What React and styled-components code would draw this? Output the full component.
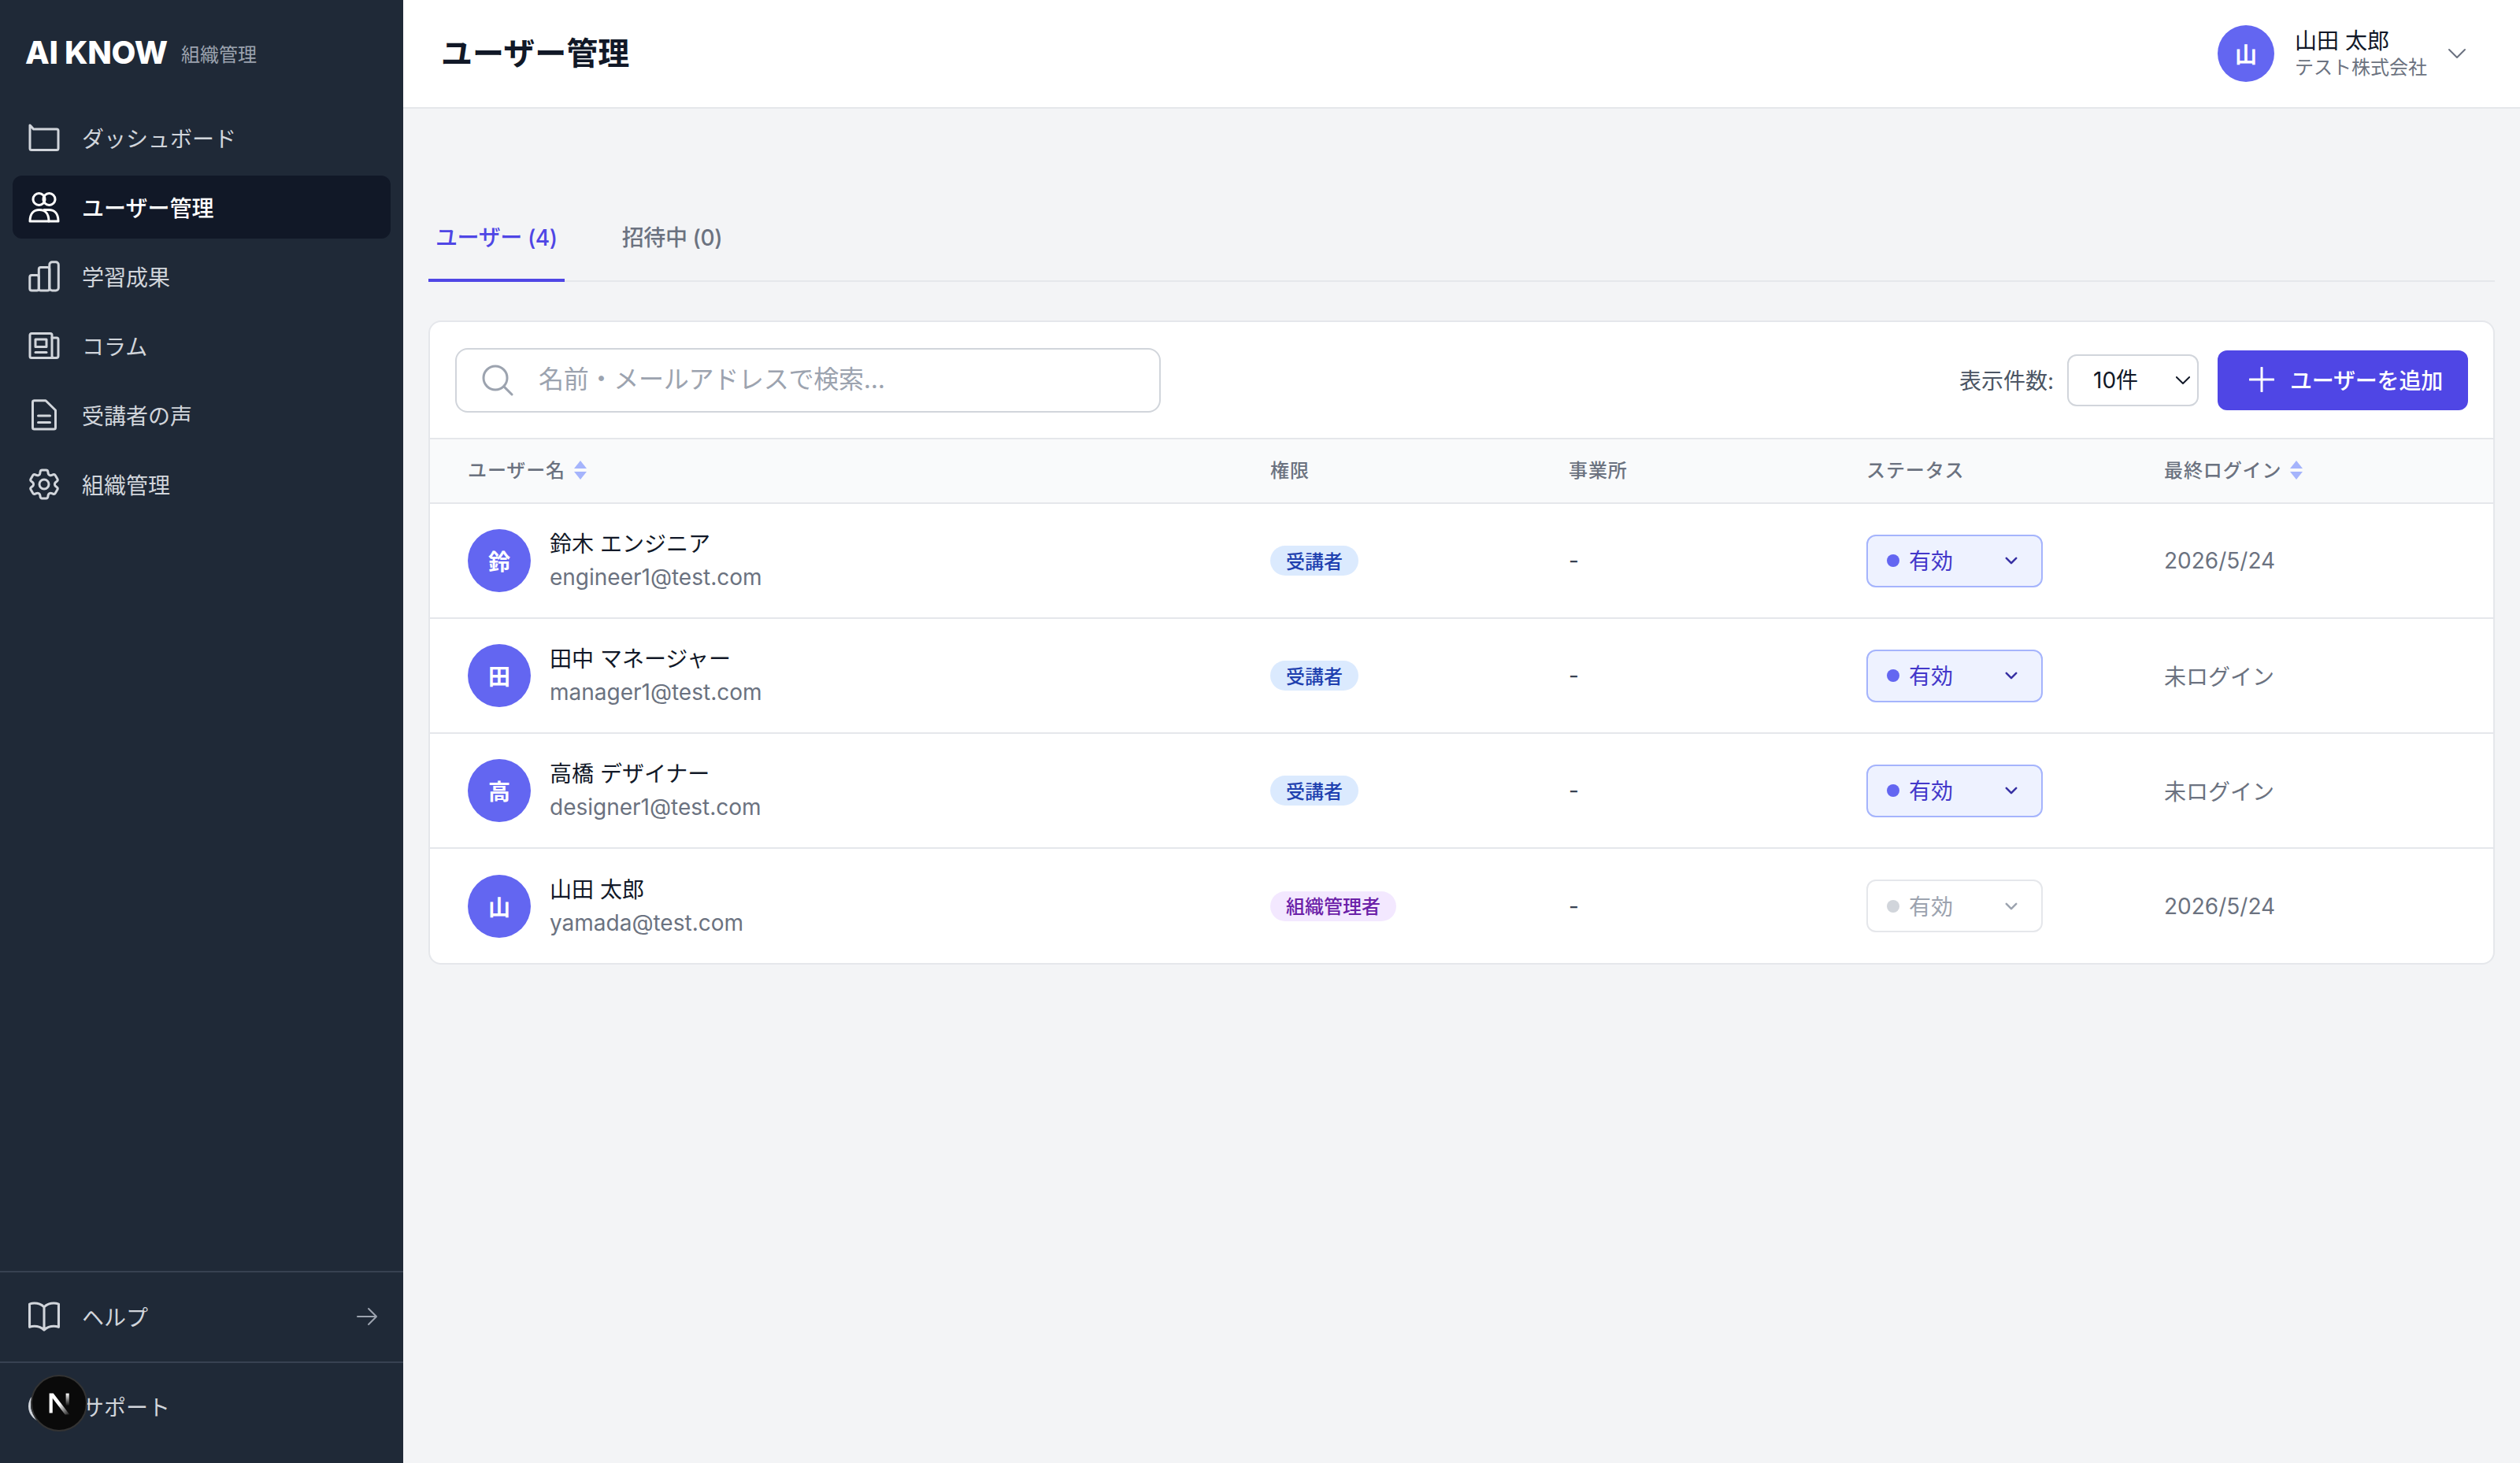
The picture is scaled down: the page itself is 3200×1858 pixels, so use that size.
import React from 'react';
import styled, { createGlobalStyle } from 'styled-components';
import { HiOutlineCog6Tooth, HiOutlineBookOpen, HiOutlineQuestionMarkCircle, HiOutlineArrowRight, HiOutlineChevronDown, HiOutlineMagnifyingGlass, HiOutlinePlus } from 'react-icons/hi2';

const Global = createGlobalStyle`
  html, body { margin: 0; padding: 0; height: 100%; }
  body { font-family: Inter, "Noto Sans CJK JP", sans-serif; background: #f3f4f6; color: #111827; overflow: hidden; }
  #root { height: 100%; }
  * { box-sizing: border-box; }
`;

const Shell = styled.div`display: flex; width: 3200px; height: 1858px;`;
const Sidebar = styled.aside`position: relative; width: 512px; flex: none; background: #1f2937; display: flex; flex-direction: column;`;
const Brand = styled.div`height: 135px; padding: 0 32px 1px; display: flex; align-items: center; gap: 17px;`;
const Logo = styled.div`font-size: 40px; font-weight: 800; color: #fff; letter-spacing: -0.3px; line-height: 1;`;
const BrandSub = styled.span`font-size: 24px; color: #9ca3af;`;
const Nav = styled.nav`flex: 1; padding: 0 16px; display: flex; flex-direction: column; gap: 8px;`;
const NavItem = styled.div`
  height: 80px; padding: 0 20px; border-radius: 12px; display: flex; align-items: center; gap: 28px;
  font-size: 28px; color: ${p => (p.$active ? '#fff' : '#d1d5db')}; background: ${p => (p.$active ? '#111827' : 'transparent')};
  font-weight: ${p => (p.$active ? 500 : 400)};
  svg { width: 40px; height: 40px; flex: none; }
`;
const FooterBlock = styled.div`border-top: 2px solid #374151; height: ${p => p.$h}px; padding: 0 16px ${p => p.$pb}px; display: flex; align-items: center;`;
const FooterItem = styled(NavItem)`flex: 1; justify-content: flex-start;`;
const ArrowWrap = styled.span`margin-left: auto; margin-right: -6px; display: flex; color: #9ca3af; svg { width: 32px; height: 32px; }`;
const DevBadge = styled.div`
  position: absolute; left: 39px; top: 1746px; width: 72px; height: 72px; border-radius: 50%;
  background: #0a0a0a; border: 2px solid #333; display: flex; align-items: center; justify-content: center;
`;

const Main = styled.main`flex: 1; min-width: 0; display: flex; flex-direction: column;`;
const Header = styled.header`height: 138px; background: #fff; border-bottom: 2px solid #e5e7eb; padding: 0 64px 0 48px; display: flex; align-items: center; justify-content: space-between;`;
const Title = styled.h1`margin: 0 0 6px; font-size: 40px; font-weight: 700; color: #111827;`;
const Account = styled.div`display: flex; align-items: center; gap: 24px;`;
const Avatar = styled.div`
  width: ${p => p.$size}px; height: ${p => p.$size}px; flex: none; border-radius: 50%; background: #6366f1; color: #fff;
  font-size: 28px; font-weight: 700; display: flex; align-items: center; justify-content: center;
`;
const AccountText = styled.div`display: flex; flex-direction: column; margin: 0 -2px 0 2px;`;
const AccountName = styled.div`font-size: 28px; line-height: 36px; color: #111827;`;
const AccountOrg = styled.div`font-size: 24px; line-height: 32px; color: #6b7280;`;
const ChevronBtn = styled.span`display: flex; color: #6b7280; svg { width: 32px; height: 32px; }`;

const Content = styled.div`padding: 0 32px; flex: 1;`;
const Tabs = styled.div`margin-top: 106px; display: flex; gap: 64px; border-bottom: 2px solid #e5e7eb; height: 114px;`;
const Tab = styled.div`
  height: 114px; padding: 2px 9px 0; margin-bottom: -2px; display: flex; align-items: center; font-size: 28px; font-weight: 500;
  color: ${p => (p.$active ? '#4f46e5' : '#6b7280')}; border-bottom: 4px solid ${p => (p.$active ? '#4f46e5' : 'transparent')};
  letter-spacing: -0.4px;
`;
const Card = styled.section`margin-top: 49px; background: #fff; border: 2px solid #e5e7eb; border-radius: 16px; overflow: hidden;`;
const Toolbar = styled.div`height: 147px; padding: 0 32px; display: flex; align-items: center; justify-content: space-between;`;
const Search = styled.div`
  width: 896px; height: 82px; border: 2px solid #d1d5db; border-radius: 16px; padding: 0 32px; display: flex; align-items: center; gap: 32px;
  color: #9ca3af; svg { width: 40px; height: 40px; flex: none; }
`;
const SearchInput = styled.input`
  flex: 1; min-width: 0; border: 0; outline: 0; background: none; padding: 0 0 2px; font: 400 32px Inter, "Noto Sans CJK JP", sans-serif; color: #111827;
  &::placeholder { color: #9ca3af; opacity: 1; letter-spacing: -0.25px; }
`;
const Controls = styled.div`display: flex; align-items: center;`;
const PerPageLabel = styled.label`font-size: 28px; color: #4b5563; margin: 0 17px 2px 0;`;
const PerPageWrap = styled.div`position: relative; margin-right: 24px; display: flex;`;
const PerPage = styled.select`
  appearance: none; width: 167px; height: 66px; border: 2px solid #d1d5db; border-radius: 12px; background: #fff; padding-left: 31px;
  font: 400 28px Inter, "Noto Sans CJK JP", sans-serif; color: #111827;
`;
const SelectChevron = styled.span`position: absolute; right: 7px; top: 20px; display: flex; color: #111827; pointer-events: none; svg { width: 26px; height: 26px; stroke-width: 1.8; }`;
const AddButton = styled.button`
  width: 318px; height: 76px; border: 0; border-radius: 12px; background: #4f46e5; color: #fff; display: flex; align-items: center; justify-content: center; gap: 20px; padding: 0 0 2px 8px;
  font: 500 28px Inter, "Noto Sans CJK JP", sans-serif; letter-spacing: -0.2px; svg { width: 32px; height: 32px; flex: none; }
`;

const Table = styled.table`width: 100%; border-collapse: collapse; table-layout: fixed;`;
const HeadRow = styled.tr`background: #f9fafb; border-top: 2px solid #e5e7eb; border-bottom: 2px solid #e5e7eb; height: 82px;`;
const Th = styled.th`padding: 0 0 6px 48px; text-align: left; font-size: 24px; font-weight: 500; color: #6b7280; letter-spacing: 0.9px;`;
const ThInner = styled.span`display: inline-flex; align-items: center; gap: 10px; svg { margin-top: 4px; }`;
const Row = styled.tr`height: 146px; border-bottom: 2px solid #e5e7eb; &:last-child { border-bottom: 0; }`;
const Td = styled.td`padding: 0 0 0 48px; font-size: 28px; color: ${p => p.$color || '#6b7280'};`;
const UserCell = styled.div`display: flex; align-items: center; gap: 24px;`;
const UserName = styled.div`font-size: 28px; line-height: 42px; color: #111827;`;
const UserMail = styled.div`font-size: 28px; line-height: 42px; color: #6b7280;`;
const Badge = styled.span`
  display: inline-flex; align-items: center; height: 38px; padding: 0 20px 2px; border-radius: 999px; font-size: 24px; font-weight: 500;
  background: ${p => p.$bg}; color: ${p => p.$fg};
`;
const Status = styled.div`
  width: 224px; height: 67px; border-radius: 12px; padding: 0 28px 2px 24px; display: flex; align-items: center; gap: 12px; font-size: 28px;
  border: 2px solid ${p => (p.$off ? '#e5e7eb' : '#a5b4fc')}; background: ${p => (p.$off ? '#fff' : '#eef2ff')}; color: ${p => (p.$off ? '#9ca3af' : '#4338ca')};
`;
const Dot = styled.span`width: 16px; height: 16px; margin-top: 2px; border-radius: 50%; background: ${p => (p.$off ? '#d1d5db' : '#6366f1')};`;
const StatusArrow = styled.span`margin: 2px 0 0 auto; display: flex; color: ${p => (p.$off ? '#9ca3af' : '#3730a3')}; svg { width: 20px; height: 20px; stroke-width: 3; }`;
const Glyph = styled.svg.attrs({ viewBox: '0 0 40 40', fill: 'none', stroke: 'currentColor', strokeWidth: 3, strokeLinejoin: 'round', strokeLinecap: 'round' })``;

const Sort = () => (
  <svg width="18" height="24" viewBox="0 0 18 24" aria-hidden="true">
    <path d="M9 0l8 10H1z" fill="#a5b4fc" />
    <path d="M9 24L1 14h16z" fill="#a5b4fc" />
  </svg>
);
const NextMark = () => (
  <svg width="62" height="62" viewBox="0 0 180 180" aria-hidden="true">
    <defs>
      <linearGradient id="nx1" x1="95" y1="90" x2="135" y2="130" gradientUnits="userSpaceOnUse"><stop stopColor="#fff" /><stop offset="1" stopColor="#fff" stopOpacity="0" /></linearGradient>
      <linearGradient id="nx2" x1="121" y1="54" x2="120" y2="100" gradientUnits="userSpaceOnUse"><stop stopColor="#fff" /><stop offset="1" stopColor="#fff" stopOpacity="0" /></linearGradient>
    </defs>
    <path d="M54 54h15l60 78h-17L66.1 72v54H54z" fill="url(#nx1)" />
    <rect x="115" y="54" width="12" height="72" fill="url(#nx2)" />
  </svg>
);

const FolderIcon = () => <Glyph><path d="M2 4v29.5a2 2 0 0 0 2 2h32a2 2 0 0 0 2-2V11a2 2 0 0 0-2-2H6.500L3.500 5.500z" /></Glyph>;
const UsersIcon = () => (
  <Glyph>
    <circle cx="13.500" cy="10" r="7.500" /><circle cx="26.500" cy="10" r="7.500" />
    <path d="M2 38c0-10 5-14.500 12-14.500S26 28 26 38z" />
    <path d="M20 23.600c1-.1 4-.1 6-.1 7 0 12 4.500 12 14.500H26" />
  </Glyph>
);
const ChartIcon = () => (
  <Glyph>
    <rect x="1.800" y="18.500" width="11.500" height="19.500" rx="2.500" />
    <rect x="13.300" y="8.500" width="13.500" height="29.500" rx="2.500" />
    <rect x="26.800" y="1.800" width="11.500" height="36.200" rx="3.500" />
  </Glyph>
);
const NewsIcon = () => (
  <Glyph>
    <path d="M4 4.500h24a2 2 0 0 1 2 2V33a2.500 2.500 0 0 0 2.500 2.500H4a2 2 0 0 1-2-2V6.500a2 2 0 0 1 2-2z" />
    <path d="M30 10h6a2 2 0 0 1 2 2v21a2.500 2.500 0 0 1-2.500 2.500h-3" />
    <rect x="9" y="12" width="14" height="9.500" />
    <path d="M9 28.500h14" />
  </Glyph>
);
const DocIcon = () => (
  <Glyph>
    <path d="M7.500 1.800H22L34.500 14v22a2 2 0 0 1-2 2h-25a2 2 0 0 1-2-2V3.800a2 2 0 0 1 2-2z" />
    <path d="M12.500 21h15M12.500 29.500h15" />
  </Glyph>
);
const GearIcon = () => <HiOutlineCog6Tooth viewBox="2 2 20 20" strokeWidth="1.5" />;
const BookIcon = () => <HiOutlineBookOpen viewBox="2.25 2.25 19.5 19.5" strokeWidth="1.5" />;
const SupportIcon = () => <HiOutlineQuestionMarkCircle viewBox="2.25 2.25 19.5 19.5" strokeWidth="1.5" />;

const users = [
  { a: '鈴', n: '鈴木 エンジニア', m: 'engineer1@test.com', r: '受講者', d: '2026/5/24' },
  { a: '田', n: '田中 マネージャー', m: 'manager1@test.com', r: '受講者', d: '未ログイン' },
  { a: '高', n: '高橋 デザイナー', m: 'designer1@test.com', r: '受講者', d: '未ログイン' },
  { a: '山', n: '山田 太郎', m: 'yamada@test.com', r: '組織管理者', d: '2026/5/24', admin: true },
];
const nav = [
  [FolderIcon, 'ダッシュボード'],
  [UsersIcon, 'ユーザー管理', true],
  [ChartIcon, '学習成果'],
  [NewsIcon, 'コラム'],
  [DocIcon, '受講者の声'],
  [GearIcon, '組織管理'],
];

export default function App() {
  return (
    <Shell>
      <Global />
      <Sidebar>
        <Brand><Logo>AI KNOW</Logo><BrandSub>組織管理</BrandSub></Brand>
        <Nav>
          {nav.map(([I, t, a]) => <NavItem key={t} $active={a}><I />{t}</NavItem>)}
        </Nav>
        <FooterBlock $h={115} $pb={2}><FooterItem><BookIcon />ヘルプ<ArrowWrap><HiOutlineArrowRight /></ArrowWrap></FooterItem></FooterBlock>
        <FooterBlock $h={129} $pb={18}><FooterItem><SupportIcon />サポート</FooterItem></FooterBlock>
        <DevBadge><NextMark /></DevBadge>
      </Sidebar>
      <Main>
        <Header>
          <Title>ユーザー管理</Title>
          <Account>
            <Avatar $size={72}>山</Avatar>
            <AccountText><AccountName>山田 太郎</AccountName><AccountOrg>テスト株式会社</AccountOrg></AccountText>
            <ChevronBtn><HiOutlineChevronDown /></ChevronBtn>
          </Account>
        </Header>
        <Content>
          <Tabs><Tab $active>ユーザー (4)</Tab><Tab>招待中 (0)</Tab></Tabs>
          <Card>
            <Toolbar>
              <Search><HiOutlineMagnifyingGlass viewBox="2 2 20 20" strokeWidth="1.5" /><SearchInput placeholder="名前・メールアドレスで検索..." /></Search>
              <Controls>
                <PerPageLabel>表示件数:</PerPageLabel>
                <PerPageWrap>
                  <PerPage defaultValue="10"><option value="10">10件</option><option value="25">25件</option></PerPage>
                  <SelectChevron><HiOutlineChevronDown /></SelectChevron>
                </PerPageWrap>
                <AddButton><HiOutlinePlus viewBox="4 4 16 16" strokeWidth="1.5" />ユーザーを追加</AddButton>
              </Controls>
            </Toolbar>
            <Table>
              <colgroup><col style={{ width: 1019 }} /><col style={{ width: 379 }} /><col style={{ width: 378 }} /><col style={{ width: 378 }} /><col /></colgroup>
              <thead>
                <HeadRow>
                  <Th><ThInner>ユーザー名<Sort /></ThInner></Th>
                  <Th>権限</Th><Th>事業所</Th><Th>ステータス</Th>
                  <Th><ThInner>最終ログイン<Sort /></ThInner></Th>
                </HeadRow>
              </thead>
              <tbody>
                {users.map(u => (
                  <Row key={u.m}>
                    <Td><UserCell><Avatar $size={80}>{u.a}</Avatar><div><UserName>{u.n}</UserName><UserMail>{u.m}</UserMail></div></UserCell></Td>
                    <Td><Badge $bg={u.admin ? '#f3e8ff' : '#dbeafe'} $fg={u.admin ? '#6b21a8' : '#1e40af'}>{u.r}</Badge></Td>
                    <Td $color="#374151">-</Td>
                    <Td><Status $off={u.admin}><Dot $off={u.admin} />有効<StatusArrow $off={u.admin}><HiOutlineChevronDown /></StatusArrow></Status></Td>
                    <Td>{u.d}</Td>
                  </Row>
                ))}
              </tbody>
            </Table>
          </Card>
        </Content>
      </Main>
    </Shell>
  );
}
